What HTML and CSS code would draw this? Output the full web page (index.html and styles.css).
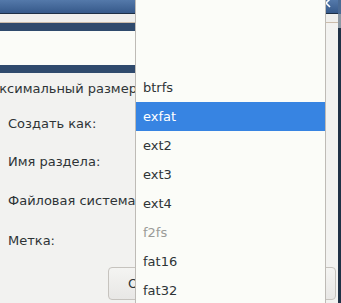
FILE: index.html
```html
<!DOCTYPE html>
<html lang="ru">
<head>
  <meta charset="UTF-8">
  <meta name="viewport" content="width=device-width, initial-scale=1.0">
  <title>Новый раздел</title>
  <link rel="stylesheet" href="styles.css">
</head>
<body>
  <div class="window">
    <div class="main">
      <!-- Title Bar -->
      <header class="titlebar">
        <svg class="close-icon" width="12" height="12" viewBox="0 0 12 12">
          <path d="M2 2 L10 10 M10 2 L2 10" stroke="#fff" stroke-width="1.6" fill="none"/>
        </svg>
      </header>
      <div class="toolbar"></div>

      <!-- Partition graph -->
      <div class="graph"></div>

      <!-- Form -->
      <div class="form">
        <div class="row row-size"><span class="label label-clipped">Максимальный размер</span></div>
        <div class="row row-type"><span class="label">Создать как:</span></div>
        <div class="row row-name"><span class="label">Имя раздела:</span></div>
        <div class="row row-fs"><span class="label">Файловая система:</span></div>
        <div class="row row-tag"><span class="label">Метка:</span></div>
      </div>

      <div class="buttons">
        <button class="btn">Отмена</button>
      </div>
    </div>
    <div class="edge"></div>
  </div>

  <!-- File system dropdown -->
  <ul class="popup">
    <li>btrfs</li>
    <li class="selected">exfat</li>
    <li>ext2</li>
    <li>ext3</li>
    <li>ext4</li>
    <li class="disabled">f2fs</li>
    <li>fat16</li>
    <li>fat32</li>
  </ul>
</body>
</html>
```

FILE: styles.css
```css
body {
  font-family: "DejaVu Sans", sans-serif;
  font-size: 13px;
  margin: 0;
  padding: 0;
  width: 341px;
  height: 303px;
  overflow: hidden;
  background-color: #f2f2f0;
  color: #2e3436;
  position: relative;
}

.window {
  display: flex;
  height: 303px;
}

.main {
  width: 338px;
}

/* Title Bar */
.titlebar {
  height: 13px;
  border-bottom: 1px solid #1d2f46;
  background: linear-gradient(#5479aa, #36598a);
  position: relative;
}

.close-icon {
  position: absolute;
  left: 320px;
  top: -3px;
}

.toolbar {
  height: 8px;
  background-color: #efefed;
  border-bottom: 1px solid #cbbcab;
}

/* Partition graph */
.graph {
  width: 300px;
  height: 34px;
  background-color: #fbfcf8;
  border-top: 8px solid #2f4a6d;
  border-bottom: 8px solid #2f4a6d;
}

/* Form */
.form {
  display: flex;
  flex-direction: column;
}

.row {
  display: flex;
  align-items: center;
  padding-left: 8px;
}

.row-size { height: 31px; }
.row-type { height: 38px; }
.row-name { height: 39px; }
.row-fs { height: 39px; }
.row-tag { height: 40px; }

.label {
  white-space: nowrap;
}

.label-clipped {
  margin-left: -28px;
}

/* Buttons */
.buttons {
  display: flex;
  padding-left: 108px;
  margin-top: 7px;
}

.btn {
  width: 228px;
  height: 33px;
  border: 1px solid #c6c3be;
  border-radius: 4px;
  background: linear-gradient(#f4f4f2, #e8e7e5);
  font-family: "DejaVu Sans", sans-serif;
  font-size: 13px;
  color: #2e3436;
  text-align: left;
  padding-left: 19px;
}

.edge {
  width: 3px;
  background: linear-gradient(#4a6a94 0, #4a6a94 14px, #8c98a4 14px, #8c98a4 28px, #1f3146 28px);
}

/* Dropdown */
.popup {
  position: absolute;
  left: 135px;
  top: 0;
  width: 191px;
  height: 303px;
  margin: 0;
  padding: 73px 0 0 0;
  overflow: hidden;
  list-style: none;
  background-color: #fbfcf8;
  border-left: 1px solid #bebbb6;
  border-right: 1px solid #bebbb6;
  box-sizing: border-box;
}

.popup li {
  height: 29px;
  line-height: 29px;
  padding-left: 7px;
}

.popup li.selected {
  background-color: #3784e2;
  color: #fff;
}

.popup li.disabled {
  color: #9a9b97;
}
```
